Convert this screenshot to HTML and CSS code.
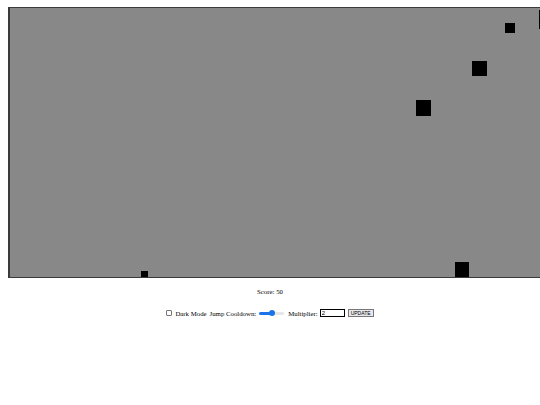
FILE: index.html
```html
<!DOCTYPE html>
<html>
<head>
<meta charset="utf-8">
<link rel="stylesheet" href="styles.css">
</head>
<body>
<div class="page">
  <div class="stage">
    <div class="game">
      <div class="block b1"></div>
      <div class="block b2"></div>
      <div class="block b3"></div>
      <div class="block b4"></div>
      <div class="block b5"></div>
      <div class="block b6"></div>
    </div>
  </div>
  <div class="score">Score: 50</div>
  <div class="controls">
    <label class="check"><input type="checkbox" class="box"> Dark Mode</label>
    <label class="cool">Jump Cooldown: <input type="range" class="slider" min="0" max="100" value="50"></label>
    <label class="mult">Multiplier: <input type="text" class="num" value="2"></label>
    <button class="btn">UPDATE</button>
  </div>
</div>
</body>
</html>
```
FILE: styles.css
```css
html, body {
  margin: 0;
  padding: 0;
  background: #fff;
  overflow: hidden;
}
.page {
  width: 540px;
  height: 405px;
  font-family: "Liberation Serif", "Times New Roman", serif;
  font-size: 6.8px;
  color: #000;
}
.stage {
  padding: 7px 0 0 8px;
  overflow: hidden;
}
.game {
  position: relative;
  width: 560px;
  height: 269px;
  background: #888888;
  border: 1px solid #3a3a3a;
  border-left-width: 2px;
}
.block {
  position: absolute;
  background: #000;
}
.b1 { left: 495px; top: 15px; width: 10px; height: 10px; }
.b2 { left: 529px; top: 2px; width: 10px; height: 19px; }
.b3 { left: 462px; top: 53px; width: 15px; height: 15px; }
.b4 { left: 406px; top: 92px; width: 15px; height: 16px; }
.b5 { left: 131px; top: 263px; width: 7px; height: 6px; }
.b6 { left: 445px; top: 254px; width: 14px; height: 15px; }
.score {
  margin-top: 10px;
  line-height: 8px;
  text-align: center;
}
.controls {
  margin-top: 12px;
  display: flex;
  justify-content: center;
  align-items: center;
  height: 10px;
  gap: 3px;
}
label {
  display: flex;
  align-items: center;
  gap: 2px;
  white-space: nowrap;
}
.box {
  appearance: none;
  margin: 0 1px 0 0;
  width: 6px;
  height: 6px;
  border: 1px solid #767676;
  border-radius: 1px;
  background: #fff;
}
.slider {
  appearance: none;
  margin: 0 1px;
  width: 25px;
  height: 3px;
  border-radius: 2px;
  background: linear-gradient(to right, #1a73e8 0, #1a73e8 50%, #e6e6e6 50%, #e6e6e6 100%);
}
.slider::-webkit-slider-thumb {
  appearance: none;
  width: 6px;
  height: 6px;
  border-radius: 50%;
  background: #1a73e8;
  border: none;
}
.num {
  box-sizing: border-box;
  margin: 0;
  width: 25px;
  height: 8px;
  padding: 0 1px;
  border: 1px solid #000;
  font-family: "Liberation Sans", Arial, sans-serif;
  font-size: 6px;
  line-height: 6px;
  background: #fff;
}
.btn {
  box-sizing: border-box;
  margin: 0;
  height: 8px;
  padding: 0 2px;
  border: 1px solid #777;
  background: #e9e9ed;
  font-family: "Liberation Sans", Arial, sans-serif;
  font-size: 5px;
  line-height: 6px;
  color: #000;
}
```
